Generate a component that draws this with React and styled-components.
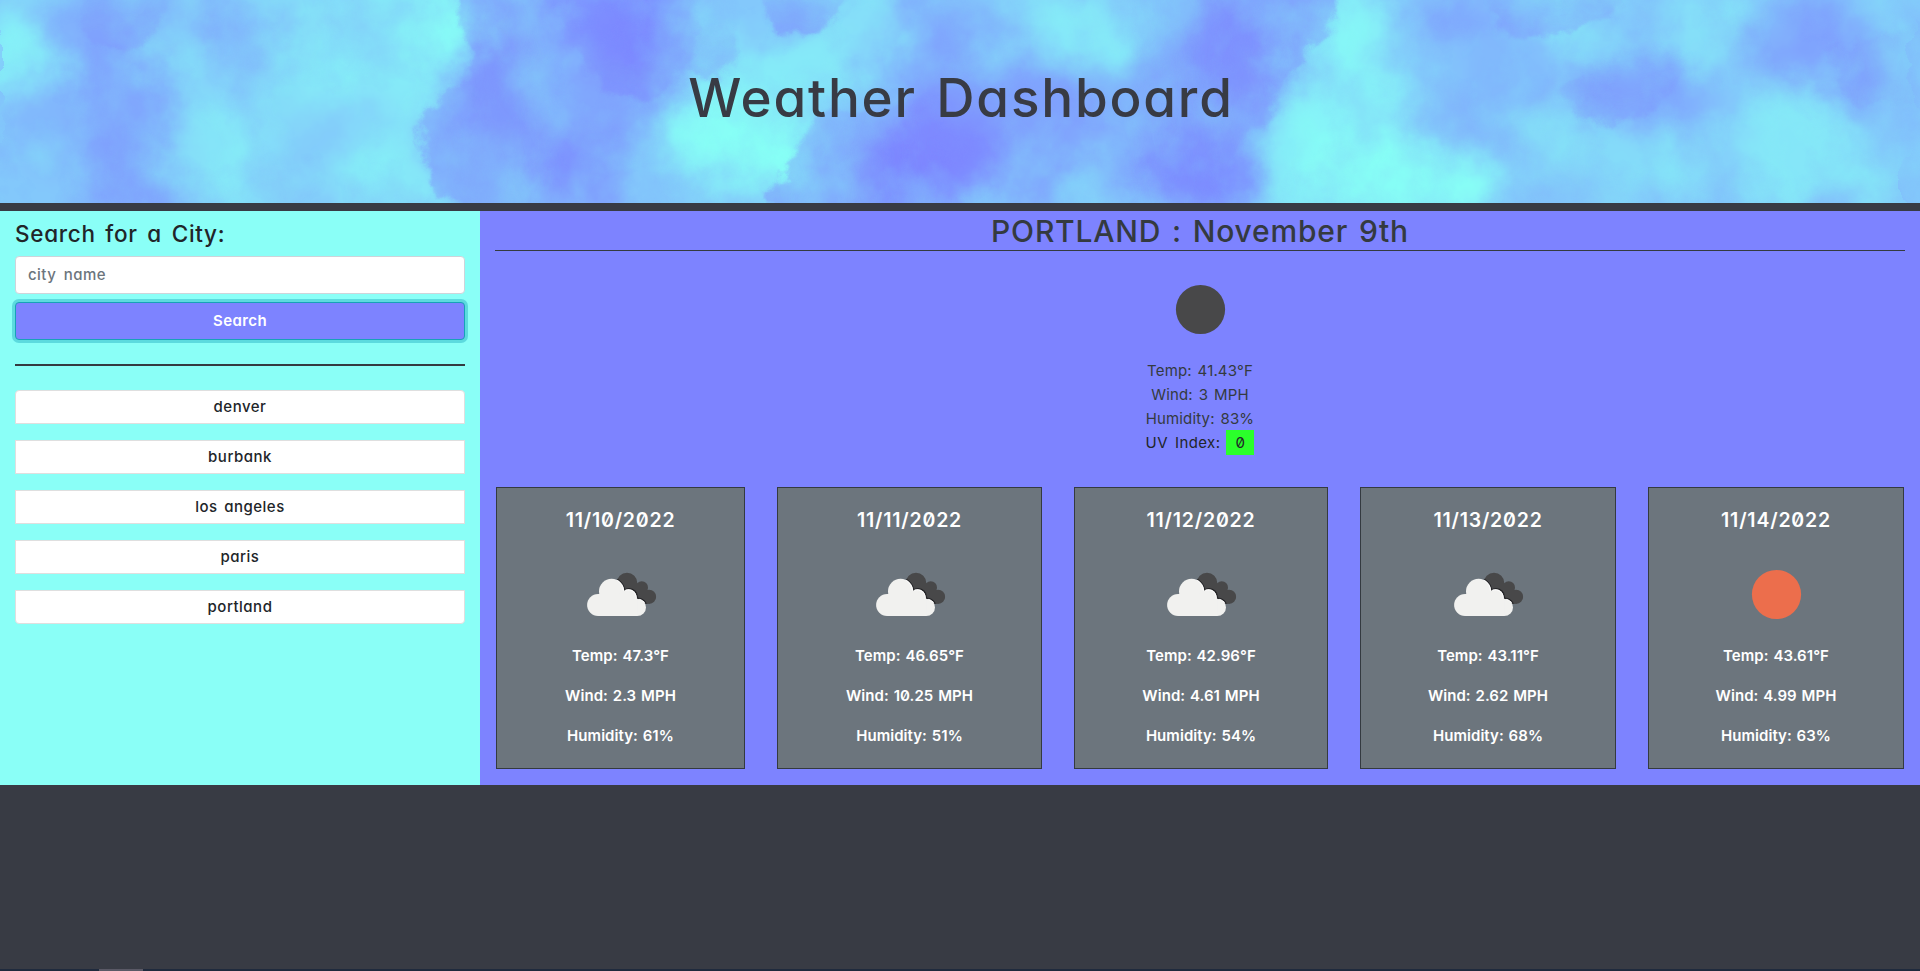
import React from "react";
import styled, { createGlobalStyle } from "styled-components";

const ink = "#383b44";
const slate = "#343a40";
const violet = "#7d83ff";
const aqua = "#8afff7";

const GlobalStyle = createGlobalStyle`
  *, *::before, *::after { box-sizing: border-box; }
  body {
    margin: 0;
    background: ${ink};
    color: #212529;
    font-family: Inter, "Open Sans", sans-serif;
    font-feature-settings: "cv11", "zero";
    font-size: 15px;
    line-height: 24px;
  }
  h1, h2, h3, h4, p, ul { margin: 0; padding: 0; font-weight: 500; }
`;

const Page = styled.div`
  display: flex;
  flex-direction: column;
  height: 971px;
  overflow: hidden;
`;

const Banner = styled.header`
  display: grid;
  height: 211px;
  flex: none;
  border-bottom: 8px solid ${ink};
  overflow: hidden;

  > * { grid-area: 1 / 1; }
`;

const Sky = styled.svg`
  display: block;
  width: 1920px;
  height: 203px;
`;

const Title = styled.h1`
  z-index: 1;
  padding: 66px 0 0 2px;
  text-align: center;
  color: ${ink};
  font-size: 53px;
  line-height: 64px;
  letter-spacing: 1.8px;
  word-spacing: 3.5px;
`;

const Main = styled.main`
  display: grid;
  grid-template-columns: 480px 1fr;
  height: 574px;
  flex: none;
`;

const Sidebar = styled.aside`
  display: flex;
  flex-direction: column;
  padding: 9px 15px 0;
  background: ${aqua};
`;

const SideHeading = styled.h3`
  margin-bottom: 8px;
  font-size: 22.5px;
  line-height: 28px;
  letter-spacing: 0.7px;
  word-spacing: 3px;
`;

const CityInput = styled.input`
  height: 38px;
  padding: 5px 12px 7px;
  border: 1px solid #ced4da;
  border-radius: 4px;
  background: #fff;
  font: inherit;
  font-feature-settings: inherit;
  font-weight: 500;
  letter-spacing: 0.45px;
  word-spacing: 3px;

  &::placeholder { color: #6c757d; opacity: 1; }
`;

const SearchButton = styled.button`
  height: 38px;
  margin-top: 8px;
  border: 1px solid #17a2b8;
  border-radius: 4px;
  background: ${violet};
  box-shadow: 0 0 0 3px rgba(23, 162, 184, 0.4);
  color: #fff;
  font: inherit;
  font-feature-settings: inherit;
  font-weight: 600;
  letter-spacing: 0.4px;
`;

const Divider = styled.hr`
  width: 100%;
  margin: 24px 0;
  border: 0;
  border-top: 2px solid ${slate};
`;

const History = styled.ul`
  display: flex;
  flex-direction: column;
  gap: 16px;
  list-style: none;
`;

const HistoryItem = styled.li`
  height: 34px;
  border: 1px solid #dfdfdf;
  background: #fff;
  text-align: center;
  font-weight: 500;
  line-height: 32px;
  letter-spacing: 0.5px;
  word-spacing: 2px;

  &:first-child { border-radius: 4px 4px 0 0; }
  &:last-child { border-radius: 0 0 4px 4px; }
`;

const Forecast = styled.section`
  display: flex;
  flex-direction: column;
  padding: 0 15px;
  background: ${violet};
`;

const Place = styled.h2`
  height: 40px;
  padding-top: 1px;
  border-bottom: 1px solid ${slate};
  color: ${slate};
  text-align: center;
  font-size: 30px;
  line-height: 38px;
  letter-spacing: 0.8px;
  word-spacing: 2px;
`;

const Current = styled.div`
  display: flex;
  flex-direction: column;
  align-items: center;
  padding-top: 8px;
`;

const Icon = styled.svg`
  display: block;
  width: 100px;
  height: 100px;
  flex: none;
`;

const Reading = styled.p`
  color: ${slate};
  font-weight: 400;
  letter-spacing: 0.15px;
  word-spacing: 1.5px;
`;

const UvReading = styled.p`
  display: flex;
  height: 24px;
  gap: 6px;
  color: #212529;
  font-weight: 400;
  letter-spacing: 0.4px;
  word-spacing: 2.5px;
`;

const UvBadge = styled.span`
  width: 28px;
  height: 25px;
  margin-top: -1px;
  background: #2bff2b;
  text-align: center;
  line-height: 26px;
`;

const Week = styled.div`
  display: grid;
  grid-template-columns: 249fr 265fr 254fr 256fr 256fr;
  gap: 32px;
  margin: 32px 1px 0;
`;

const DayCard = styled.article`
  display: flex;
  flex-direction: column;
  align-items: center;
  height: 282px;
  padding-top: 20px;
  border: 1px solid ${slate};
  background: #6c757d;
  color: #fff;
`;

const DayDate = styled.h4`
  margin-bottom: 12px;
  font-size: 19.5px;
  font-weight: 600;
  letter-spacing: 0.8px;
`;

const DayReading = styled.p`
  margin-bottom: 16px;
  font-weight: 600;
  letter-spacing: 0.05px;
  word-spacing: 1px;
`;

const Taskbar = styled.footer`
  height: 2px;
  margin-top: auto;
  padding-left: 99px;
  background: #1f2a3d;
`;

const TaskbarTab = styled.div`
  width: 44px;
  height: 2px;
  background: #5a5966;
`;

const softClouds = [
  ["c", 20, 60, 40, 50, 0.7], ["p", 110, 25, 60, 35, 0.35], ["p", 115, 110, 45, 65, 0.5],
  ["p", 35, 120, 30, 40, 0.3], ["p", 130, 195, 40, 35, 0.5], ["c", 175, 45, 22, 60, 0.5],
  ["p", 235, 25, 40, 40, 0.3], ["c", 290, 60, 35, 80, 0.4], ["c", 380, 45, 85, 70, 0.6],
  ["c", 440, 30, 38, 45, 0.8], ["c", 215, 145, 45, 45, 0.5], ["c", 385, 185, 50, 60, 0.6],
  ["c", 265, 190, 60, 30, 0.3], ["p", 495, 85, 36, 50, 0.6], ["p", 510, 30, 45, 50, 0.3],
  ["p", 570, 140, 60, 60, 0.5], ["p", 580, 180, 55, 40, 0.6], ["p", 450, 120, 32, 30, 0.35],
  ["p", 610, 20, 62, 55, 0.85], ["p", 640, 65, 50, 40, 0.7], ["c", 735, 60, 40, 40, 0.6],
  ["c", 750, 145, 62, 52, 1], ["c", 700, 125, 35, 50, 0.7], ["c", 810, 65, 50, 40, 0.6],
  ["c", 850, 10, 50, 22, 0.5], ["p", 930, 60, 50, 60, 0.5], ["p", 935, 165, 70, 55, 0.95],
  ["p", 880, 190, 55, 40, 0.6], ["p", 1020, 130, 80, 60, 0.55], ["c", 1090, 25, 55, 28, 0.6],
  ["c", 1030, 15, 25, 30, 0.5], ["p", 1240, 45, 55, 60, 0.75], ["p", 1195, 175, 60, 45, 0.85],
  ["p", 1140, 95, 70, 50, 0.4], ["c", 1090, 185, 30, 25, 0.35], ["c", 1355, 20, 45, 35, 0.8],
  ["c", 1340, 100, 75, 55, 0.7], ["c", 1400, 180, 90, 45, 1], ["c", 1300, 180, 50, 70, 0.6],
  ["p", 1470, 15, 40, 28, 0.45], ["p", 1500, 90, 45, 50, 0.25], ["c", 1590, 30, 50, 35, 0.6],
  ["c", 1710, 25, 40, 40, 0.5], ["p", 1640, 90, 75, 40, 0.42], ["p", 1600, 115, 35, 18, 0.3],
  ["p", 1780, 30, 60, 40, 0.35], ["p", 1840, 65, 60, 45, 0.45], ["c", 1560, 135, 30, 40, 0.4],
  ["c", 1640, 170, 60, 45, 0.35], ["c", 1790, 150, 70, 60, 0.55], ["c", 1900, 60, 30, 35, 0.3],
  ["c", 1880, 190, 50, 30, 0.5],
];

const ridges = [
  ["left", "M456 -20 Q462 35 474 52 L466 78 L444 95 L424 112 L420 150 L434 185 L474 230 L560 230 L560 -20Z", 0.5],
  ["down", "M556 -20 L566 32 L580 60 L596 76 L604 96 L640 106 L664 92 L690 60 L700 -20Z", 0.5],
  ["down", "M684 66 L700 76 L718 78 L740 52 L730 20 L690 20Z", 0.35],
  ["down", "M764 22 L778 36 L810 33 L840 16 L850 -20 L770 -20Z", 0.5],
  ["left", "M816 115 L800 145 L782 175 L768 192 L772 230 L940 230 L940 100Z", 0.45],
  ["right", "M1342 -20 L1328 32 L1312 42 L1300 66 L1278 92 L1264 128 L1240 137 L1224 180 L1204 230 L1130 230 L1130 -20Z", 0.5],
  ["down", "M1632 -20 L1616 16 L1588 20 L1570 36 L1500 30 L1480 -20Z", 0.35],
  ["down", "M1688 50 L1670 90 L1652 112 L1618 122 L1580 118 L1560 90 L1620 50Z", 0.35],
  ["left", "M1830 50 L1840 90 L1860 106 L1940 100 L1940 20Z", 0.25],
  ["down", "M76 -20 L86 34 L108 52 L134 48 L170 10 L170 -20Z", 0.3],
];

const tint = { c: "#87fff6", p: "#7d86ff" };

const fades = {
  left: { x1: 0, y1: 0, x2: 1, y2: 0 },
  right: { x1: 1, y1: 0, x2: 0, y2: 0 },
  down: { x1: 0, y1: 1, x2: 0, y2: 0 },
};

const SkyArt = () => (
  <Sky viewBox="0 0 1920 203" aria-hidden="true">
    <defs>
      {Object.entries(fades).map(([name, line]) => (
        <linearGradient key={name} id={`fade-${name}`} {...line}>
          <stop offset="0" stopColor={tint.p} />
          <stop offset="1" stopColor={tint.p} stopOpacity="0" />
        </linearGradient>
      ))}
      <filter id="mist" x="0" y="-40" width="1920" height="290" filterUnits="userSpaceOnUse" colorInterpolationFilters="sRGB">
        <feTurbulence type="fractalNoise" baseFrequency="0.014" numOctaves="6" seed="8" result="n" />
        <feGaussianBlur in="SourceGraphic" stdDeviation="17" result="b" />
        <feDisplacementMap in="b" in2="n" scale="70" xChannelSelector="R" yChannelSelector="G" />
      </filter>
      <filter id="ridge" x="-40" y="-40" width="2000" height="290" filterUnits="userSpaceOnUse" colorInterpolationFilters="sRGB">
        <feTurbulence type="fractalNoise" baseFrequency="0.045" numOctaves="5" seed="21" result="n" />
        <feGaussianBlur in="SourceGraphic" stdDeviation="2" result="b" />
        <feDisplacementMap in="b" in2="n" scale="24" xChannelSelector="R" yChannelSelector="G" />
      </filter>
      <filter id="wisps" x="0" y="0" width="1920" height="203" filterUnits="userSpaceOnUse" colorInterpolationFilters="sRGB">
        <feTurbulence type="fractalNoise" baseFrequency="0.014 0.012" numOctaves="5" seed="4" />
        <feColorMatrix values="0 0 0 0 0.53  0 0 0 0 1  0 0 0 0 0.97  2.6 0 0 0 -1.15" />
      </filter>
      <filter id="shade" x="0" y="0" width="1920" height="203" filterUnits="userSpaceOnUse" colorInterpolationFilters="sRGB">
        <feTurbulence type="fractalNoise" baseFrequency="0.013 0.012" numOctaves="5" seed="33" />
        <feColorMatrix values="0 0 0 0 0.49  0 0 0 0 0.55  0 0 0 0 1  2.6 0 0 0 -1.15" />
      </filter>
    </defs>
    <rect width="1920" height="203" fill="#83c8fb" />
    <g filter="url(#mist)">
      <rect x="-60" y="-60" width="2040" height="330" fill="#83c8fb" />
      {softClouds.map(([kind, cx, cy, rx, ry, o], i) => (
        <ellipse key={i} cx={cx} cy={cy} rx={rx} ry={ry} fill={tint[kind]} opacity={o} />
      ))}
    </g>
    <g filter="url(#ridge)">
      {ridges.map(([fade, d, o], i) => (
        <path key={i} d={d} fill={`url(#fade-${fade})`} opacity={o} />
      ))}
    </g>
    <rect width="1920" height="203" filter="url(#wisps)" opacity="0.25" />
    <rect width="1920" height="203" filter="url(#shade)" opacity="0.22" />
  </Sky>
);

const Orb = ({ color }) => (
  <Icon viewBox="0 0 100 100">
    <circle cx="50.5" cy="50.5" r="24.6" fill={color} />
  </Icon>
);

const Clouds = () => (
  <Icon viewBox="0.8 0 100 100">
    <defs>
      <clipPath id="rear-cloud">
        <circle cx="56.8" cy="39" r="10.3" />
        <circle cx="71.6" cy="43.4" r="6.2" />
        <circle cx="78.9" cy="52.8" r="7.1" />
        <path d="M52 42L70 42L78 59.9L60 58Z" />
      </clipPath>
    </defs>
    <g clipPath="url(#rear-cloud)">
      <rect width="100" height="100" fill="#484849" />
      <g fill="none" stroke="#242427" strokeWidth="1.8">
        <circle cx="41.5" cy="47.2" r="12.6" />
        <circle cx="58.8" cy="52.9" r="8.1" />
        <circle cx="67.4" cy="63.2" r="8.9" />
      </g>
    </g>
    <g fill="#f1f1ef">
      <circle cx="27.9" cy="61" r="11" />
      <circle cx="41.4" cy="47.3" r="12.6" />
      <circle cx="58.4" cy="53.2" r="8" />
      <circle cx="67.1" cy="63.4" r="8.7" />
      <path d="M28 50H40L60 48L67 55V72.1H28Z" />
    </g>
    <path d="M47 36.3A12.4 12.4 0 0 1 53.2 46.7 M55.5 46.2A8 8 0 0 1 66 55 M69 55.3A8 8 0 0 1 74.5 59" fill="none" stroke="#fff" strokeWidth="1" />
  </Icon>
);

const cities = ["denver", "burbank", "los angeles", "paris", "portland"];

const days = [
  { date: "11/10/2022", temp: "47.3", wind: "2.3", humidity: 61 },
  { date: "11/11/2022", temp: "46.65", wind: "10.25", humidity: 51 },
  { date: "11/12/2022", temp: "42.96", wind: "4.61", humidity: 54 },
  { date: "11/13/2022", temp: "43.11", wind: "2.62", humidity: 68 },
  { date: "11/14/2022", temp: "43.61", wind: "4.99", humidity: 63, clear: true },
];

export default function App() {
  return (
    <Page>
      <GlobalStyle />
      <Banner>
        <SkyArt />
        <Title>Weather Dashboard</Title>
      </Banner>
      <Main>
        <Sidebar>
          <SideHeading>Search for a City:</SideHeading>
          <CityInput placeholder="city name" />
          <SearchButton>Search</SearchButton>
          <Divider />
          <History>
            {cities.map((city) => (
              <HistoryItem key={city}>{city}</HistoryItem>
            ))}
          </History>
        </Sidebar>
        <Forecast>
          <Place>PORTLAND : November 9th</Place>
          <Current>
            <Orb color="#484849" />
            <Reading>Temp: 41.43°F</Reading>
            <Reading>Wind: 3 MPH</Reading>
            <Reading>Humidity: 83%</Reading>
            <UvReading>
              UV Index: <UvBadge>0</UvBadge>
            </UvReading>
          </Current>
          <Week>
            {days.map((day) => (
              <DayCard key={day.date}>
                <DayDate>{day.date}</DayDate>
                {day.clear ? <Orb color="#ec6e4c" /> : <Clouds />}
                <DayReading>Temp: {day.temp}°F</DayReading>
                <DayReading>Wind: {day.wind} MPH</DayReading>
                <DayReading>Humidity: {day.humidity}%</DayReading>
              </DayCard>
            ))}
          </Week>
        </Forecast>
      </Main>
      <Taskbar>
        <TaskbarTab />
      </Taskbar>
    </Page>
  );
}
